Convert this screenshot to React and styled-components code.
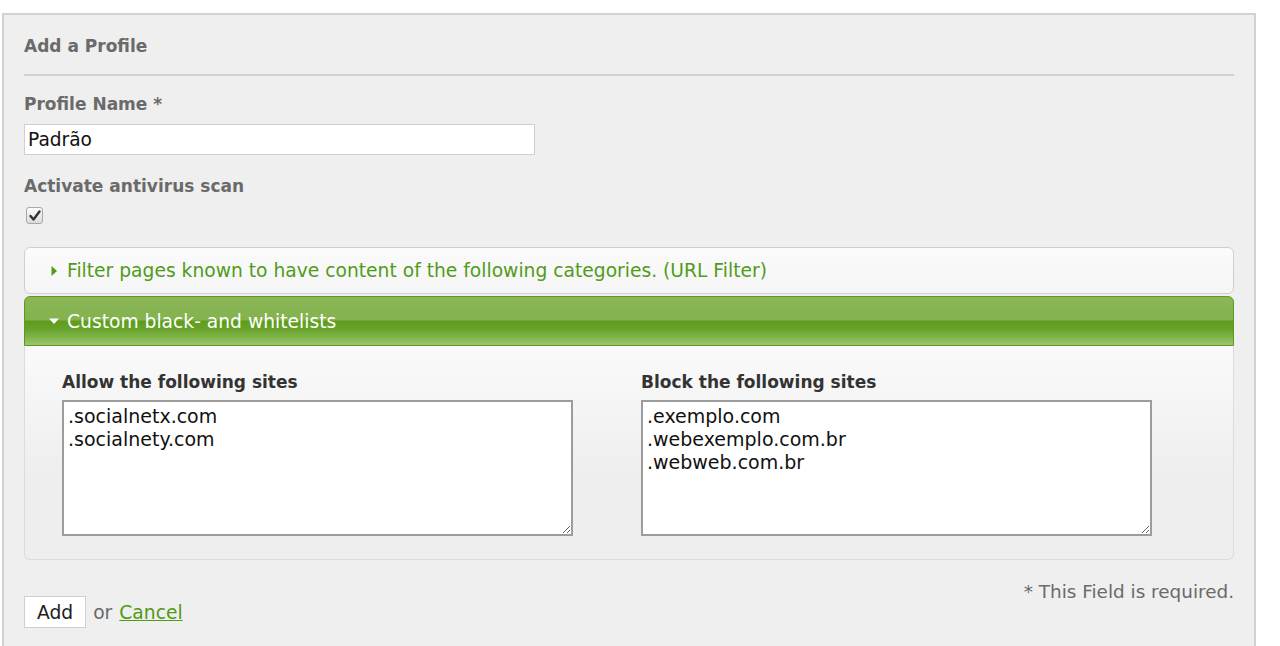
import React from 'react';
import styled, { createGlobalStyle } from 'styled-components';

const GlobalStyle = createGlobalStyle`
  html, body {
    margin: 0;
    padding: 0;
    background: #fff;
  }
  body {
    font-family: "DejaVu Sans", "Open Sans", sans-serif;
    font-size: 18.7px;
    color: #333;
  }
`;

const Page = styled.div`
  padding: 13px 0 0 2px;
  display: flex;
`;

const Panel = styled.div`
  width: 1210px;
  border: 2px solid #d2d2d2;
  border-bottom: none;
  background: #efefef;
  padding: 20px 20px 20px 20px;
`;

const Title = styled.h2`
  margin: 0;
  font-size: 17px;
  line-height: 22px;
  font-weight: 700;
  color: #6a6a6a;
  padding-bottom: 17px;
  border-bottom: 2px solid #d0d0d0;
`;

const Label = styled.div`
  font-size: 17px;
  line-height: 22px;
  font-weight: 700;
  color: ${(p) => (p.$dark ? '#333' : '#6a6a6a')};
  margin-top: ${(p) => p.$top || 0}px;
`;

const TextInput = styled.input`
  display: block;
  box-sizing: border-box;
  width: 511px;
  height: 31px;
  margin-top: 9px;
  padding: 0 3px;
  border: 1px solid #cfcfcf;
  background: #fff;
  font-family: inherit;
  font-size: 18.6px;
  color: #111;
  outline: none;
`;

const CheckBox = styled.span`
  display: flex;
  align-items: center;
  justify-content: center;
  box-sizing: border-box;
  width: 17px;
  height: 17px;
  margin: 10px 0 0 2px;
  border: 1px solid #a8a8a8;
  border-radius: 3px;
  background: linear-gradient(#fbfbfb, #dcdcdc);
`;

const Accordion = styled.div`
  margin-top: 23px;
  display: flex;
  flex-direction: column;
  gap: 2px;
`;

const Header = styled.div`
  display: flex;
  align-items: center;
  gap: 8px;
  box-sizing: border-box;
  height: ${(p) => (p.$open ? 50 : 47)}px;
  padding-left: 24px;
  font-size: 18.7px;
  border: 1px solid ${(p) => (p.$open ? '#5b9a1c' : '#cfcfcf')};
  border-radius: ${(p) => (p.$open ? '6px 6px 0 0' : '6px')};
  color: ${(p) => (p.$open ? '#fff' : '#519b1a')};
  background: ${(p) =>
    p.$open
      ? 'linear-gradient(to bottom, #8bb757 0%, #84b24e 48%, #5d9c1c 50%, #68a32a 68%, #9bc66f 100%)'
      : 'linear-gradient(to bottom, #fbfbfb, #f5f5f5)'};
`;

const Body = styled.div`
  display: grid;
  grid-template-columns: 511px 511px;
  column-gap: 68px;
  padding: 25px 38px 23px 37px;
  border: 1px solid #dcdcdc;
  border-top: none;
  border-radius: 0 0 6px 6px;
  background: linear-gradient(to bottom, #fafafa, #eeeeee 60%);
`;

const Column = styled.div`
  display: flex;
  flex-direction: column;
  gap: 7px;
`;

const Area = styled.textarea`
  box-sizing: border-box;
  width: 511px;
  height: 136px;
  padding: 3px 4px;
  border: 2px solid #9c9c9c;
  background: #fff;
  font-family: inherit;
  font-size: 19px;
  line-height: 23px;
  color: #111;
  resize: both;
  outline: none;
`;

const Footer = styled.div`
  display: flex;
  justify-content: space-between;
  align-items: flex-start;
  margin-top: 21px;
`;

const Actions = styled.div`
  display: flex;
  align-items: center;
  gap: 7px;
  margin-top: 15px;
  color: #6a6a6a;
`;

const Button = styled.button`
  height: 32px;
  padding: 0 12px;
  border: 1px solid #cfcfcf;
  background: #fff;
  font-family: inherit;
  font-size: 18.7px;
  color: #222;
`;

const Link = styled.a`
  color: #4f9a14;
  text-decoration: underline;
`;

const Note = styled.div`
  font-size: 18.4px;
  color: #6a6a6a;
  line-height: 22px;
`;

const Triangle = ({ open }) => (
  <svg width="10" height="10" viewBox="0 0 10 10">
    {open ? <path d="M0 2.5h10L5 8z" fill="#fff" /> : <path d="M2.5 0v10L8 5z" fill="#519b1a" />}
  </svg>
);

const Check = () => (
  <svg width="12" height="11" viewBox="0 0 12 11">
    <path d="M1.5 6l3 3.5L10.5 1.5" fill="none" stroke="#333" strokeWidth="2.4" strokeLinecap="round" strokeLinejoin="round" />
  </svg>
);

export default function App() {
  return (
    <>
      <GlobalStyle />
      <Page>
        <Panel>
          <Title>Add a Profile</Title>
          <Label $top={17}>Profile Name *</Label>
          <TextInput defaultValue="Padrão" />
          <Label $top={20}>Activate antivirus scan</Label>
          <CheckBox>
            <Check />
          </CheckBox>
          <Accordion>
            <Header>
              <Triangle />
              Filter pages known to have content of the following categories. (URL Filter)
            </Header>
            <div>
              <Header $open>
                <Triangle open />
                Custom black- and whitelists
              </Header>
              <Body>
                <Column>
                  <Label $dark>Allow the following sites</Label>
                  <Area defaultValue={'.socialnetx.com\n.socialnety.com'} />
                </Column>
                <Column>
                  <Label $dark>Block the following sites</Label>
                  <Area defaultValue={'.exemplo.com\n.webexemplo.com.br\n.webweb.com.br'} />
                </Column>
              </Body>
            </div>
          </Accordion>
          <Footer>
            <Actions>
              <Button>Add</Button>
              or <Link href="#">Cancel</Link>
            </Actions>
            <Note>* This Field is required.</Note>
          </Footer>
        </Panel>
      </Page>
    </>
  );
}
